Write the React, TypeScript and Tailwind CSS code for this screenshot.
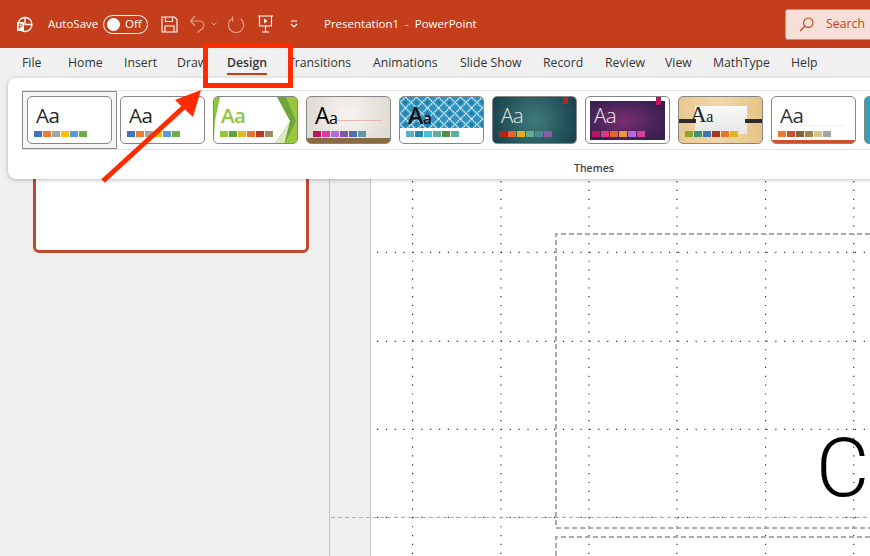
import React from "react";

const tabs: [string, string][] = [
  ["File", "w-[46px]"], ["Home", "w-[56px]"], ["Insert", "w-[53px]"], ["Draw", "w-[50px]"],
  ["Design", "w-[61px]"], ["Transitions", "w-[85px]"], ["Animations", "w-[87px]"], ["Slide Show", "w-[83px]"],
  ["Record", "w-[62px]"], ["Review", "w-[60px]"], ["View", "w-[48px]"], ["MathType", "w-[78px]"], ["Help", "w-[40px]"],
];

const office = ["#3f74b8", "#ed7d31", "#a5a5a5", "#ffc000", "#5b9bd5", "#70ad47"];

type ThumbProps = {
  className?: string;
  aa?: React.ReactNode;
  aaClass?: string;
  colors?: string[];
  children?: React.ReactNode;
};

function Thumb({ className = "", aa = "Aa", aaClass = "", colors, children }: ThumbProps) {
  return (
    <div className={"relative h-[48px] w-[85px] shrink-0 overflow-hidden rounded-[5px] border border-[#868686] " + className}>
      {children}
      {colors && (
        <div className="relative flex h-full flex-col pb-[6px] pl-[6px] pt-[5px]">
          <span className={"h-[26px] whitespace-nowrap text-[20.5px] leading-[26px] tracking-[-0.5px] " + aaClass}>{aa}</span>
          <div className="mt-auto flex gap-px">
            {colors.map((c, i) => (
              <div key={i} className="h-[6px] w-[8px]" style={{ backgroundColor: c }} />
            ))}
          </div>
        </div>
      )}
    </div>
  );
}

const mixedAa = (
  <>
    <span className="text-[23px]">A</span>
    <span className="text-[16px]">a</span>
  </>
);

function Gallery() {
  return (
    <div className="ml-[14px] mt-[12px] flex h-[60px] items-center gap-[8px] border-y border-[#e1e1e1] pl-[5px]">
      <div className="-m-[5px] mr-[-5px] shrink-0 border border-[#8a8a8a] bg-[#f5f5f5] p-[4px]">
        <Thumb className="bg-white" aaClass="pl-[2px] text-[#262626]" colors={office} />
      </div>
      <Thumb className="bg-white" aaClass="pl-[2px] text-[#262626]" colors={office} />
      <Thumb
        className="bg-white"
        aaClass="pl-[1px] font-semibold text-[#8fc63c]"
        colors={["#93c63b", "#5fa53f", "#e5b723", "#e8702a", "#b8391f", "#a38a63"]}
      >
        <svg className="absolute inset-0" width="85" height="48" viewBox="0 0 85 48">
          <polygon points="0,0 6,0 1,24 0,40" fill="#8dc63f" />
          <polygon points="63,0 85,0 85,48 60,48 76,24" fill="#6ea53c" />
          <polygon points="72,0 85,0 85,48 70,48 82,24" fill="#97c83d" />
          <polygon points="60,48 76,24 70,48" fill="#dcebc0" />
        </svg>
      </Thumb>
      <Thumb
        className="bg-[radial-gradient(circle_at_50%_40%,#f7f4f1,#ddd6d0)]"
        aa={mixedAa}
        aaClass="pl-[2px] text-black"
        colors={["#b8185e", "#da3b9f", "#b36ae2", "#8256a5", "#4f6fb0", "#5f9aa5"]}
      >
        <svg className="absolute inset-0" width="85" height="48" viewBox="0 0 85 48">
          <rect x="30" y="23" width="45" height="1" fill="#e6b9ae" />
          <rect x="0" y="41" width="85" height="7" fill="#8a6a44" />
        </svg>
      </Thumb>
      <Thumb
        className="bg-white"
        aa={mixedAa}
        aaClass="pl-[2px] font-semibold text-[#111]"
        colors={["#5aaecb", "#2586ad", "#45c4d6", "#5fb09a", "#4e8f4b", "#5dae96"]}
      >
        <svg className="absolute left-0 top-0" width="85" height="31" viewBox="0 0 85 31">
          <defs>
            <pattern id="dm" width="11" height="11" patternUnits="userSpaceOnUse">
              <rect width="11" height="11" fill="#2f93bf" />
              <polygon points="5.5,0 11,5.5 5.5,11 0,5.5" fill="none" stroke="#d8edf5" strokeWidth="1.4" strokeDasharray="1.6 0.7" />
              <polygon points="5.5,3 8,5.5 5.5,8 3,5.5" fill="#1f7fac" />
            </pattern>
          </defs>
          <rect width="85" height="31" fill="url(#dm)" />
        </svg>
      </Thumb>
      <Thumb
        className="bg-[radial-gradient(circle_at_50%_50%,#3f7a7a,#173f4c)]"
        aaClass="pl-[2px] font-light text-[#e6e6e6]"
        colors={["#b3261b", "#e8642c", "#e4ae24", "#5fae92", "#4d8a93", "#8d5aa8"]}
      >
        <svg className="absolute inset-0" width="85" height="48" viewBox="0 0 85 48">
          <rect x="70" y="0" width="5" height="7" fill="#b5261c" />
        </svg>
      </Thumb>
      <Thumb
        className="bg-white"
        aaClass="pl-[2px] font-light text-[#eee]"
        colors={["#b8185e", "#da3b7f", "#e8642c", "#eb9a3a", "#b36ae2", "#d83c9c"]}
      >
        <svg className="absolute inset-0" width="85" height="48" viewBox="0 0 85 48">
          <defs>
            <radialGradient id="pg" cx="45%" cy="50%" r="60%">
              <stop offset="0" stopColor="#7a2e72" />
              <stop offset="1" stopColor="#37204f" />
            </radialGradient>
          </defs>
          <rect x="4" y="4" width="75" height="39" fill="url(#pg)" />
          <rect x="70" y="0" width="5" height="8" fill="#b8185e" />
        </svg>
      </Thumb>
      <Thumb
        className="bg-[linear-gradient(90deg,#e9c88f,#f0d8ab_50%,#e6c386)]"
        aa={mixedAa}
        aaClass="pl-[5px] font-['Liberation_Serif',serif] text-[#222]"
        colors={["#8ea32c", "#3f9470", "#3f74b8", "#a8361f", "#e5762a", "#dfb32b"]}
      >
        <svg className="absolute inset-0" width="85" height="48" viewBox="0 0 85 48">
          <defs>
            <linearGradient id="pp" x1="0" y1="0" x2="0" y2="1">
              <stop offset="0" stopColor="#fafafa" />
              <stop offset="1" stopColor="#e6e6e4" />
            </linearGradient>
          </defs>
          <rect x="16" y="9" width="52" height="28" fill="url(#pp)" />
          <rect x="0" y="22" width="17" height="4" fill="#2d2d2d" />
          <rect x="66" y="22" width="19" height="4" fill="#2d2d2d" />
        </svg>
      </Thumb>
      <Thumb
        className="bg-white"
        aaClass="pl-[2px] text-[#333]"
        colors={["#e87d2a", "#c9512d", "#8b5e3c", "#9c8355", "#d9c58a", "#a5a5a5"]}
      >
        <svg className="absolute inset-0" width="85" height="48" viewBox="0 0 85 48">
          <rect x="8" y="28" width="65" height="1" fill="#eeeeee" />
          <rect x="0" y="43" width="85" height="4" fill="#c9512d" />
        </svg>
      </Thumb>
      <Thumb className="bg-[linear-gradient(90deg,#2aa3b8,#3c8fc4)]" />
    </div>
  );
}

const gridX = [412.6, 501, 589, 677, 765.6, 853.7];
const gridY = [252.3, 341.3, 429.3, 517.3];

export default function App() {
  return (
    <div className="relative flex h-[556px] w-[870px] flex-col overflow-hidden bg-[#efefef] font-['Open_Sans',sans-serif]">
      {/* Title bar */}
      <header className="flex h-[48px] shrink-0 items-center bg-[#c43e1c] text-white">
        <svg className="ml-[16px] shrink-0" width="17" height="17" viewBox="0 0 17 17" fill="none" stroke="white" strokeWidth="1.3">
          <circle cx="9" cy="8.5" r="7" />
          <path d="M9 1.5v7h7" />
          <rect x="1" y="6" width="7" height="9" rx="1" fill="white" stroke="none" />
          <path d="M3.2 13V8h1.6a1.3 1.3 0 010 2.8H3.2" stroke="#c43e1c" strokeWidth="1" />
        </svg>
        <span className="ml-[15px] w-[55px] shrink-0 text-[11.5px] font-medium">AutoSave</span>
        <div className="flex h-[19px] w-[45px] shrink-0 items-center rounded-full border border-white pl-[3px]">
          <div className="h-[13px] w-[13px] rounded-full bg-white" />
          <span className="ml-[5px] text-[11.5px] font-medium leading-none">Off</span>
        </div>
        <svg className="ml-[13px] shrink-0" width="17" height="17" viewBox="0 0 17 17" fill="none" stroke="white" strokeWidth="1.1">
          <path d="M1 1h12.5L16 3.5V16H1z" />
          <path d="M4.5 1v4.5h7V1M4 16v-6h9v6" />
        </svg>
        <svg className="ml-[11px] shrink-0" width="17" height="18" viewBox="0 0 17 18" fill="none" stroke="#e39c87" strokeWidth="1.2">
          <path d="M6 1L1.5 6 6 11" />
          <path d="M2 6h8c5 0 6 4 4 7l-5.5 4.5" />
        </svg>
        <svg className="ml-[5px] shrink-0" width="6" height="4" viewBox="0 0 6 4" fill="none" stroke="#e39c87">
          <path d="M.5 .5L3 3 5.5 .5" />
        </svg>
        <svg className="ml-[11px] shrink-0" width="17" height="17" viewBox="0 0 17 17" fill="none" stroke="#e39c87" strokeWidth="1.2">
          <path d="M12.5 2.8A7.6 7.6 0 114.6 2.2" />
          <path d="M4.6 .6v5" />
        </svg>
        <svg className="ml-[13px] shrink-0" width="15" height="18" viewBox="0 0 15 18" fill="none" stroke="white" strokeWidth="1.1">
          <path d="M0 1h15M1.5 1v10h12V1M7.5 11v6M4 17h7" />
          <path d="M6 3.5l3.5 2.5L6 8.5z" fill="white" stroke="none" />
        </svg>
        <svg className="ml-[17px] shrink-0" width="8" height="8" viewBox="0 0 8 8" fill="none" stroke="white" strokeWidth="1.1">
          <path d="M1 1h6M1 4l3 3 3-3" />
        </svg>
        <span className="ml-[26px] shrink-0 whitespace-pre text-[11.5px]">Presentation1  -  PowerPoint</span>
        <div className="ml-auto mr-[-30px] flex h-[31px] w-[115px] shrink-0 items-center rounded-[3px] border border-[#a79b97] bg-[#f6dfd8] pl-[13px] text-[#c43e1c]">
          <svg width="15" height="15" viewBox="0 0 15 15" fill="none" stroke="#c43e1c" strokeWidth="1.1">
            <circle cx="9.3" cy="5.7" r="4.7" />
            <path d="M6 9L1 14" />
          </svg>
          <span className="ml-[12px] text-[12.3px]">Search</span>
        </div>
      </header>

      {/* Tabs */}
      <nav className="flex h-[30px] shrink-0 items-start bg-[#f0f0f0] pl-[22px] pt-[6px] text-[12.25px] leading-[18px] text-[#333]">
        {tabs.map(([t, w]) => (
          <span key={t} className={w + " shrink-0 whitespace-nowrap"}>
            {t === "Design" ? (
              <span className="inline-block border-b-2 border-[#c43e1c] pb-[1px] font-semibold text-[#333]">{t}</span>
            ) : (
              t
            )}
          </span>
        ))}
      </nav>

      {/* Work area */}
      <main className="relative flex flex-1">
        <aside className="h-full w-[330px] shrink-0 border-r border-[#c6c6c6] pl-[33px] pt-[60px]">
          <div className="h-[115px] w-[276px] rounded-[6px] border-[3px] border-[#bf4a2f] bg-white" />
        </aside>
        <div className="h-full w-[41px] shrink-0 border-r border-[#c6c6c6]" />
        <div className="h-full flex-1 bg-white" />
      </main>

      {/* Slide guides, dots and placeholders on the canvas */}
      <svg className="absolute inset-0" width="870" height="556" viewBox="0 0 870 556" fill="none">
        {gridX.map((x) => (
          <line key={x} x1={x} y1="181" x2={x} y2="556" stroke="#333" strokeWidth="1.2" strokeDasharray="1.2 7.65" />
        ))}
        {gridY.map((y) => (
          <line key={y} x1="377" y1={y} x2="870" y2={y} stroke="#333" strokeWidth="1.2" strokeDasharray="1.2 7.65" />
        ))}
        <line x1="331" y1="517.5" x2="870" y2="517.5" stroke="#b0b0b0" strokeDasharray="4 3" />
        <path d="M870 234H556V528H870" stroke="#ababab" strokeWidth="2" strokeDasharray="5 3" />
        <path d="M870 537H556V556" stroke="#ababab" strokeWidth="2" strokeDasharray="5 3" />
      </svg>
      <span className="absolute left-[816px] top-[418px] font-['Roboto',sans-serif] text-[82px] font-light leading-[100px] text-black">C</span>

      {/* Floating ribbon */}
      <section className="absolute left-[8px] top-[78px] h-[101px] w-[900px] rounded-[8px] bg-white shadow-[0_1px_4px_rgba(0,0,0,0.25)]">
        <Gallery />
        <div className="ml-[566px] mt-[11px] text-[10.5px] font-semibold leading-[14px] text-[#444]">Themes</div>
      </section>

      {/* Annotation */}
      <div className="absolute left-[203px] top-[43px] h-[45px] w-[90px] border-[5px] border-[#ff2a00]" />
      <svg className="absolute inset-0" width="870" height="556" viewBox="0 0 870 556" fill="none">
        <line x1="103" y1="181" x2="185" y2="106" stroke="#ff2a00" strokeWidth="5" />
        <polygon points="201,90 175,100 193,117" fill="#ff2a00" />
      </svg>
    </div>
  );
}
